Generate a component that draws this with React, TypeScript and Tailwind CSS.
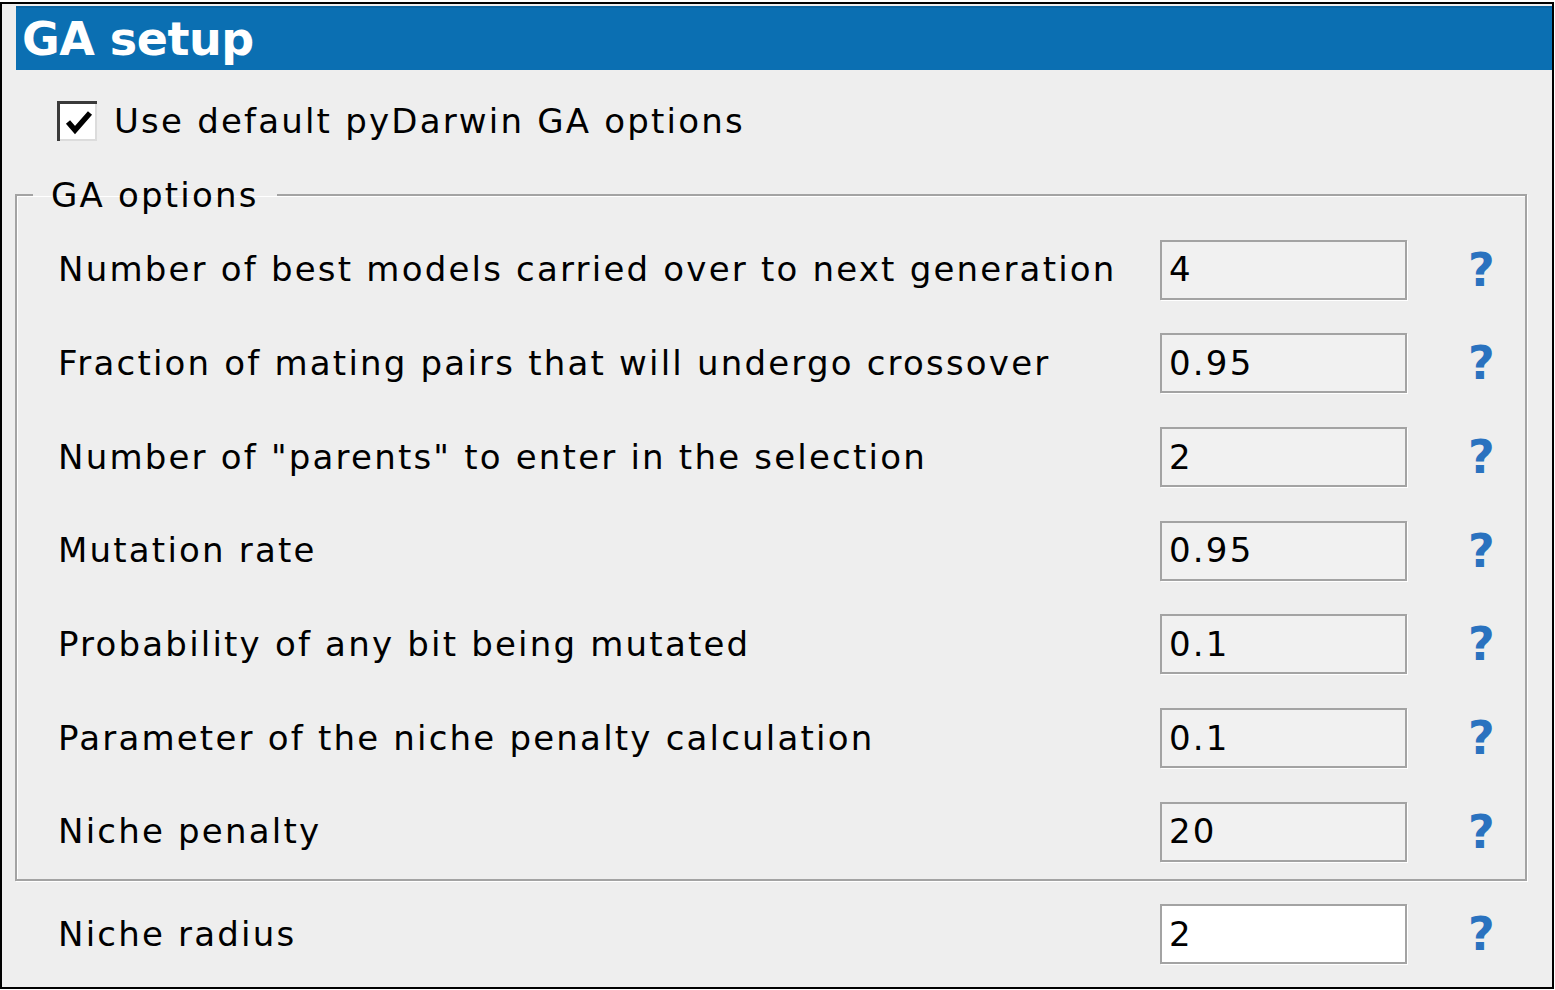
import React from 'react';

const rows = [
  { label: 'Number of best models carried over to next generation', value: '4' },
  { label: 'Fraction of mating pairs that will undergo crossover', value: '0.95' },
  { label: 'Number of "parents" to enter in the selection', value: '2' },
  { label: 'Mutation rate', value: '0.95' },
  { label: 'Probability of any bit being mutated', value: '0.1' },
  { label: 'Parameter of the niche penalty calculation', value: '0.1' },
  { label: 'Niche penalty', value: '20' },
];

const Help = () => (
  <span className="ml-[61px] text-[46px] font-bold leading-none text-[#2a72bf]">?</span>
);

const Field = ({ value, white }: { value: string; white?: boolean }) => (
  <div
    className={
      'w-[247px] h-[60px] border-2 border-[#a3a3a3] shadow-[1px_1px_0_#ffffff] flex items-center pl-[7px] text-[34px] tracking-[2.2px] text-black ' +
      (white ? 'bg-white' : 'bg-[#f1f1f1]')
    }
  >
    {value}
  </div>
);

const Row = ({ label, value, white }: { label: string; value: string; white?: boolean }) => (
  <div className="flex items-center h-[93.67px]">
    <div className="w-[1102px] text-[34px] text-black tracking-[2.2px] whitespace-nowrap">{label}</div>
    <Field value={value} white={white} />
    <Help />
  </div>
);

export default function App() {
  return (
    <div className="w-[1555px] h-[990px] bg-white" style={{ fontFamily: '"DejaVu Sans", Verdana, sans-serif' }}>
      <div className="mt-[2px] w-[1554px] h-[987px] border-2 border-black bg-[#eeeeee] flex flex-col">
        <div className="ml-[14px] mt-[2px] h-[64px] bg-[#0b6fb2] border-t-2 border-[#0a63a0] flex items-center pl-[6px]">
          <span className="text-[46px] font-bold text-white leading-none tracking-[-0.5px]">GA setup</span>
        </div>

        <div className="mt-[31px] h-[40px] flex items-center ml-[55px]">
          <div className="w-[40px] h-[40px] bg-white border-t-[3px] border-l-[3px] border-[#3a3a3a] shadow-[inset_-2px_-2px_0_#dcdcdc] flex items-center justify-center">
            <svg width="28" height="26" viewBox="0 0 28 26">
              <path d="M3 12 L10 20 L25 3" stroke="#000" strokeWidth="5.5" fill="none" strokeLinejoin="miter" />
            </svg>
          </div>
          <span className="ml-[17px] text-[34px] text-black tracking-[2.2px]">Use default pyDarwin GA options</span>
        </div>

        <fieldset className="mt-[34px] ml-[13px] w-[1512px] border-2 border-[#a3a3a3] shadow-[1px_1px_0_#ffffff,inset_1px_1px_0_#ffffff]">
          <legend className="ml-[16px] px-[18px] text-[34px] leading-[40px] text-black tracking-[2.2px]">GA options</legend>
          <div className="mt-[8px] pl-[41px]">
            {rows.map((r) => (
              <Row key={r.label} label={r.label} value={r.value} />
            ))}
          </div>
        </fieldset>

        <div className="mt-[7px] ml-[56px]">
          <Row label="Niche radius" value="2" white />
        </div>
      </div>
    </div>
  );
}
